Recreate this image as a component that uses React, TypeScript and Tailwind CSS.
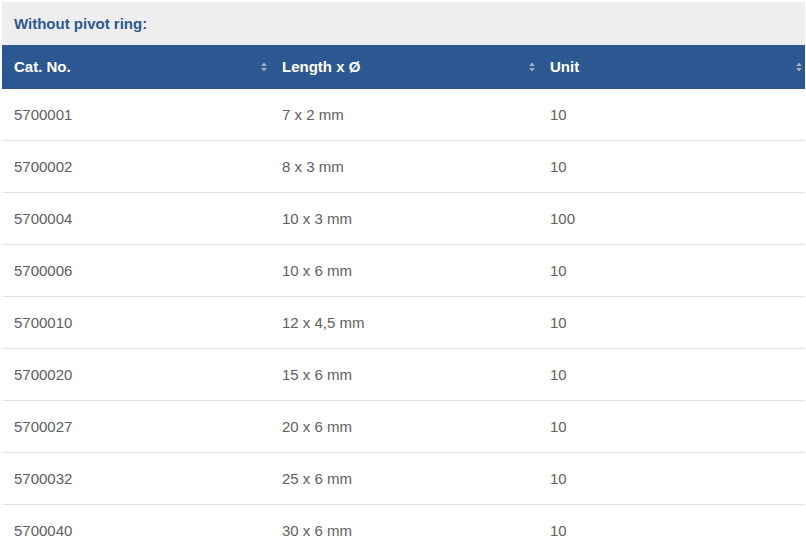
import React from 'react';

const rows = [
  ['5700001', '7 x 2 mm', '10'],
  ['5700002', '8 x 3 mm', '10'],
  ['5700004', '10 x 3 mm', '100'],
  ['5700006', '10 x 6 mm', '10'],
  ['5700010', '12 x 4,5 mm', '10'],
  ['5700020', '15 x 6 mm', '10'],
  ['5700027', '20 x 6 mm', '10'],
  ['5700032', '25 x 6 mm', '10'],
  ['5700040', '30 x 6 mm', '10'],
];

const SortIcon = () => (
  <svg width="6" height="10" viewBox="0 0 6 10" className="shrink-0">
    <path d="M3 0.5 L5.8 4 L0.2 4 Z" fill="#a9b4c6" />
    <path d="M3 9.5 L5.8 6 L0.2 6 Z" fill="#a9b4c6" />
  </svg>
);

const App = () => {
  return (
    <div className="w-[806px] h-[556px] overflow-hidden bg-white pt-[2px] pl-[2px] pr-[1px]" style={{ fontFamily: '"Liberation Sans", Arial, sans-serif' }}>
      {/* Заголовок */}
      <div className="h-[43px] bg-[#eeeeee] flex items-center px-3 pt-px">
        <span className="text-[15px] font-bold text-[#2c5891]">Without pivot ring:</span>
      </div>

      {/* Шапка таблицы */}
      <div className="grid grid-cols-[268px_268px_1fr] h-[44px] bg-[#2c5891] text-white">
        {['Cat. No.', 'Length x Ø', 'Unit'].map((h) => (
          <div key={h} className="flex items-center justify-between pl-3 pr-[3px]">
            <span className="text-[15px] font-bold">{h}</span>
            <SortIcon />
          </div>
        ))}
      </div>

      {rows.map((r) => (
        <div key={r[0]} className="grid grid-cols-[268px_268px_1fr] h-[52px] border-b border-[#e3e3e3] text-[15px] text-[#606060]">
          {r.map((c, i) => (
            <div key={i} className="flex items-center pl-3 pt-px">{c}</div>
          ))}
        </div>
      ))}
    </div>
  );
};

export default App;
